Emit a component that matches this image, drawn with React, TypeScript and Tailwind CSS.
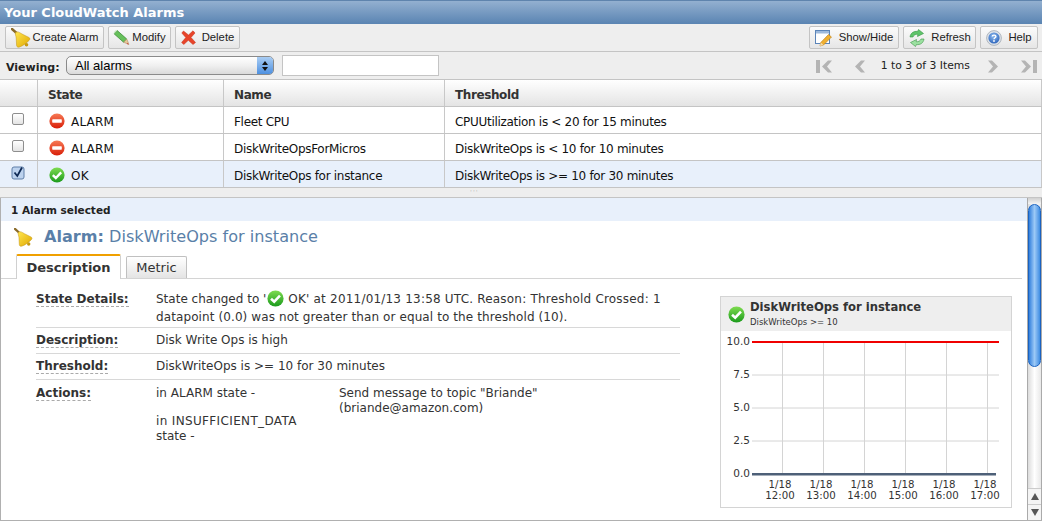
import React from "react";

const F = "[font-family:'DejaVu_Sans',Verdana,sans-serif]";
const G = "[font-family:'Liberation_Sans',Arial,sans-serif]";

function Bell({ s = 20, id }: { s?: number; id: string }) {
  return (
    <svg width={s} height={s} viewBox="0 0 20 20" className="shrink-0">
      <defs>
        <linearGradient id={id} x1="0" y1="0" x2="1" y2="1">
          <stop offset="0" stopColor="#ffe650" />
          <stop offset="1" stopColor="#e0a800" />
        </linearGradient>
      </defs>
      <path d="M1 1 L5.5 5" stroke="#8a6a28" strokeWidth="2.4" strokeLinecap="round" />
      <path d="M4.5 4.5 C6.5 3 8.5 4.5 11 6 L18 9.5 C19.5 10.5 19 11.5 18 12.5 C15 15.5 11.5 18 8.5 19 C7 19.5 5.8 19 5.6 17.5 L5.2 10 C5.1 8 3.8 6 4.5 4.5Z" fill={`url(#${id})`} stroke="#c09010" strokeWidth="0.5" />
      <circle cx="15.5" cy="16.8" r="1.8" fill="#c89a10" />
    </svg>
  );
}

function Pencil() {
  return (
    <svg width="17" height="17" viewBox="0 0 16 16" className="shrink-0">
      <path d="M1 4.5 L4 1.5 L13 9.5 L10 12.5 Z" fill="#66c05a" stroke="#3d8a38" strokeWidth="0.7" />
      <path d="M10 12.5 L13 9.5 L15 14.5 Z" fill="#e8c89a" stroke="#a8865a" strokeWidth="0.5" />
      <path d="M13.6 13.2 L15 14.5 L13 14 Z" fill="#d03030" />
      <path d="M1 4.5 L4 1.5 L2.8 1 L0.8 3Z" fill="#c8e8c0" />
    </svg>
  );
}

function RedX() {
  return (
    <svg width="15" height="15" viewBox="0 0 15 15" className="shrink-0">
      <path d="M2.5 1 L7.5 5 L12 0.8 L14 3 L10 7.5 L14.5 12.5 L12 14.5 L7.3 10.3 L2.8 14.5 L0.6 12.5 L4.8 7.6 L0.8 3 Z" fill="#e8442a" stroke="#c03018" strokeWidth="0.5" />
    </svg>
  );
}

function ShowHide() {
  return (
    <svg width="18" height="18" viewBox="0 0 18 18" className="shrink-0">
      <rect x="0.5" y="1.5" width="14" height="13" fill="#fff" stroke="#5b84b8" />
      <rect x="1" y="2" width="13" height="2.5" fill="#9db9dc" />
      <path d="M5 17 L5.8 13.5 L13.5 5.5 L16.5 8 L8.5 16 Z" fill="#f0b030" stroke="#b97a10" strokeWidth="0.6" />
      <path d="M5 17 L5.8 13.5 L8.5 16Z" fill="#f4dcb0" />
    </svg>
  );
}

function Refresh() {
  return (
    <svg width="18" height="18" viewBox="0 0 18 18" className="shrink-0">
      <path d="M2 8 C2.5 4 6 1.8 9.5 2.5 L10.5 0.5 L15.5 4.5 L9.5 7.5 L9.8 5.3 C7.5 5 5.8 6 5 8 Z" fill="#5fc46a" stroke="#3a9648" strokeWidth="0.6" />
      <path d="M16 10 C15.5 14 12 16.2 8.5 15.5 L7.5 17.5 L2.5 13.5 L8.5 10.5 L8.2 12.7 C10.5 13 12.2 12 13 10 Z" fill="#9be0a0" stroke="#3a9648" strokeWidth="0.6" />
    </svg>
  );
}

function Help() {
  return (
    <svg width="16" height="16" viewBox="0 0 16 16" className="shrink-0">
      <defs>
        <radialGradient id="helpg" cx="0.45" cy="0.35" r="0.7">
          <stop offset="0" stopColor="#8fbcf0" />
          <stop offset="1" stopColor="#2860b8" />
        </radialGradient>
      </defs>
      <circle cx="8" cy="8" r="7.4" fill="#dfe4ea" stroke="#8a94a0" strokeWidth="0.6" />
      <circle cx="8" cy="8" r="5.6" fill="url(#helpg)" />
      <path d="M6.2 6.5 C6.2 4.6 9.9 4.6 9.9 6.5 C9.9 7.8 8 7.8 8 9.2" fill="none" stroke="#fff" strokeWidth="1.4" />
      <circle cx="8" cy="11" r="0.9" fill="#fff" />
    </svg>
  );
}

function AlarmIcon({ id }: { id: string }) {
  return (
    <svg width="16" height="16" viewBox="0 0 16 16" className="shrink-0 block">
      <defs>
        <linearGradient id={id} x1="0" y1="0" x2="0" y2="1">
          <stop offset="0" stopColor="#f77a55" />
          <stop offset="1" stopColor="#d81e08" />
        </linearGradient>
      </defs>
      <circle cx="8" cy="8" r="7.6" fill={`url(#${id})`} />
      <rect x="3.2" y="6.3" width="9.6" height="3.4" rx="0.6" fill="#fff" />
    </svg>
  );
}

function OkIcon({ id, s = 16 }: { id: string; s?: number }) {
  return (
    <svg width={s} height={s} viewBox="0 0 16 16" className="shrink-0 block">
      <defs>
        <linearGradient id={id} x1="0" y1="0" x2="0" y2="1">
          <stop offset="0" stopColor="#7fdc50" />
          <stop offset="1" stopColor="#1a9a1c" />
        </linearGradient>
      </defs>
      <circle cx="8" cy="8" r="7.6" fill={`url(#${id})`} />
      <path d="M3.8 8.2 L6.8 11 L12.2 5.4" fill="none" stroke="#fff" strokeWidth="2.4" />
    </svg>
  );
}

function Btn({ icon, label, w, gap = "gap-[7px]" }: { icon: React.ReactNode; label: string; w: string; gap?: string }) {
  return (
    <div className={`${w} ${gap} h-[23px] flex items-center justify-center rounded-[2px] border border-[#c4c4c4] bg-gradient-to-b from-[#fbfbfb] to-[#e6e6e6] text-[#222] ${G} text-[11.3px]`}>
      {icon}
      <span>{label}</span>
    </div>
  );
}

function Pager({ dir, bar }: { dir: "l" | "r"; bar?: boolean }) {
  return (
    <svg width="17" height="15" viewBox="0 0 17 15" style={{ transform: dir === "r" ? "scaleX(-1)" : undefined }}>
      {bar && <rect x="0" y="1" width="4" height="13" fill="#b4b4b4" />}
      <path d={bar ? "M12 1.5 L6 7.5 L12 13.5 L16 13.5 L11 7.5 L16 1.5 Z" : "M9 1.5 L3 7.5 L9 13.5 L13 13.5 L8 7.5 L13 1.5 Z"} fill="#b4b4b4" />
    </svg>
  );
}

function Row({ sel, state, name, th, iconId }: { sel?: boolean; state: string; name: string; th: string; iconId: string }) {
  const ok = state === "OK";
  return (
    <div className={`grid grid-cols-[38px_186px_221px_1fr] h-[27px] border-b border-[#c4c4c4] ${sel ? "bg-[#e8f0fb]" : "bg-white"} text-[12px] tracking-[-0.3px] text-[#111]`}>
      <div className="flex items-center justify-center border-r border-[#c8c8c8] pb-[2px] pr-[2px]">
        {sel ? (
          <svg width="14" height="14" viewBox="0 0 14 14">
            <rect x="1" y="1" width="12" height="12" rx="2" fill="#bcd2ee" stroke="#5f7fa8" />
            <path d="M3.5 6.5 L6.3 10 L11 1.5" fill="none" stroke="#0f2a55" strokeWidth="1.8" />
          </svg>
        ) : (
          <div className="w-[12px] h-[12px] rounded-[2px] border border-[#8e8e8e] bg-gradient-to-b from-white to-[#e4e4e4]" />
        )}
      </div>
      <div className="flex items-center gap-[6px] pl-[11px] border-r border-[#c8c8c8]">
        <span className="pt-[1px]">{ok ? <OkIcon id={iconId} /> : <AlarmIcon id={iconId} />}</span>
        <span className="pt-[3px] tracking-[0.2px]">{state}</span>
      </div>
      <div className="flex items-center pl-[10px] pt-[3px] border-r border-[#c8c8c8]">{name}</div>
      <div className="flex items-center pl-[10px] pt-[3px] border-r border-[#c8c8c8]">{th}</div>
    </div>
  );
}

function Detail({ label, children, last, pad = "pt-[3px] pb-[4px]" }: { label: string; children: React.ReactNode; last?: boolean; pad?: string }) {
  return (
    <div className={`grid grid-cols-[120px_1fr] ${last ? "" : "border-b border-[#d8d8d8]"} ${pad}`}>
      <div className="font-bold text-[#333]">
        <span className="border-b border-dashed border-[#aaa]">{label}</span>
      </div>
      <div className="text-[#333]">{children}</div>
    </div>
  );
}

function Chart() {
  const ys: [string, number][] = [["10.0", 46], ["7.5", 79], ["5.0", 112], ["2.5", 145], ["0.0", 178]];
  const xs = [62, 103, 144, 185, 226, 267];
  const times = ["12:00", "13:00", "14:00", "15:00", "16:00", "17:00"];
  return (
    <div className="w-[292px] h-[212px] shrink-0 border border-[#d4d4d4] bg-white">
      <div className="h-[34px] bg-[#eeeeee] flex items-center pl-[7px] gap-[5px]">
        <OkIcon id="okchart" s={17} />
        <div className="flex flex-col">
          <span className="text-[11.6px] leading-[14px] font-bold text-[#333]">DiskWriteOps for instance</span>
          <span className="text-[8.5px] leading-[14px] text-[#333] mt-[1px]">DiskWriteOps &gt;= 10</span>
        </div>
      </div>
      <svg width="290" height="176" viewBox="0 35 290 176" className="block">
        {ys.slice(1, 4).map(([, y]) => (
          <line key={y} x1="31" x2="278" y1={y} y2={y} stroke="#d4d4d4" />
        ))}
        {xs.map((x) => (
          <line key={x} x1={x - 0.5} x2={x - 0.5} y1="46" y2="178" stroke="#d4d4d4" />
        ))}
        <rect x="31" y="45" width="247" height="2" fill="#f00000" />
        <rect x="31" y="177" width="244" height="2.5" fill="#4e6078" />
        {ys.map(([t, y]) => (
          <g key={t}>
            <text x="29" y={y + 2.5} textAnchor="end" fontSize="10.5" fill="#333" fontFamily="DejaVu Sans">{t}</text>
          </g>
        ))}
        {xs.map((x, i) => (
          <g key={x} fontSize="10.2" fill="#333" fontFamily="DejaVu Sans" textAnchor="middle">
            <text x={x - 3} y="192">1/18</text>
            <text x={x - 3} y="203">{times[i]}</text>
          </g>
        ))}
      </svg>
    </div>
  );
}

function Scrollbar() {
  return (
    <div className="w-[15px] shrink-0 flex flex-col bg-gradient-to-r from-[#dcdcdc] via-white to-[#e8e8e8] border-x border-[#aaa]">
      <div className="h-[6px] bg-gradient-to-b from-[#d0d0d0] to-[#f4f4f4]" />
      <div className="h-[163px] rounded-[7px] border border-[#1a62c0] bg-gradient-to-r from-[#2f7fdc] via-[#9cc9f6] to-[#3d8ce2]" />
      <div className="flex-1" />
      <div className="h-[16px] flex items-center justify-center border-t border-[#ccc] bg-[#f4f4f4]">
        <svg width="8" height="7" viewBox="0 0 8 7"><path d="M4 0 L8 7 L0 7Z" fill="#555" /></svg>
      </div>
      <div className="h-[16px] flex items-center justify-center border-t border-[#ccc] bg-[#f4f4f4]">
        <svg width="8" height="7" viewBox="0 0 8 7"><path d="M4 7 L8 0 L0 0Z" fill="#555" /></svg>
      </div>
    </div>
  );
}

export default function App() {
  return (
    <div className={`w-[1042px] h-[521px] overflow-hidden flex flex-col bg-white ${F}`}>
      <div className="h-[24px] shrink-0 flex items-center pl-[4px] border-t border-[#5f84ad] bg-gradient-to-b from-[#93b0d0] to-[#5a84b2] text-white font-bold text-[13px]">
        Your CloudWatch Alarms
      </div>
      <div className="h-[28px] shrink-0 flex items-center justify-between px-[5px] pr-[4px] bg-[#eeeeee] border-b border-[#c4c4c4]">
        <div className="flex gap-[4px]">
          <Btn w="w-[99px]" icon={<Bell s={20} id="bellbtn" />} label="Create Alarm" gap="gap-[2px]" />
          <Btn w="w-[63px]" icon={<Pencil />} label="Modify" gap="gap-[2px]" />
          <Btn w="w-[65px]" icon={<RedX />} label="Delete" gap="gap-[6px]" />
        </div>
        <div className="flex gap-[4px]">
          <Btn w="w-[90px]" icon={<ShowHide />} label="Show/Hide" gap="gap-[6px]" />
          <Btn w="w-[73px]" icon={<Refresh />} label="Refresh" gap="gap-[5px]" />
          <Btn w="w-[58px]" icon={<Help />} label="Help" gap="gap-[6px]" />
        </div>
      </div>
      <div className="h-[28px] shrink-0 flex items-center bg-[#eeeeee] border-b border-[#c4c4c4] pl-[6px] pr-[5px]">
        <span className="w-[60px] font-bold text-[11px] text-[#222] pt-[5px]">Viewing:</span>
        <div className={`w-[208px] h-[19px] flex items-center justify-between rounded-[5px] border border-[#8a8a8a] bg-gradient-to-b from-white via-[#f0f0f0] to-[#dadada] pl-[8px] text-[13px] text-black ${G}`}>
          <span className="pt-[1px]">All alarms</span>
          <div className="w-[16px] h-full rounded-r-[4px] bg-gradient-to-b from-[#a9cdf3] to-[#4d90e0] flex flex-col items-center justify-center gap-[2px]">
            <svg width="6" height="4" viewBox="0 0 6 4"><path d="M3 0 L6 4 L0 4Z" fill="#111" /></svg>
            <svg width="6" height="4" viewBox="0 0 6 4"><path d="M3 4 L6 0 L0 0Z" fill="#111" /></svg>
          </div>
        </div>
        <div className="w-[157px] h-[21px] ml-[8px] bg-white border border-[#c4c4c4]" />
        <div className="ml-auto flex items-center text-[#222] text-[10.8px] pt-[2px]">
          <Pager dir="l" bar />
          <div className="w-[19px]" />
          <Pager dir="l" />
          <span className="ml-[12px] mr-[14px] whitespace-nowrap">1 to 3 of 3 Items</span>
          <Pager dir="r" />
          <div className="w-[19px]" />
          <Pager dir="r" bar />
        </div>
      </div>
      <div className="grid grid-cols-[38px_186px_221px_1fr] h-[27px] shrink-0 border-b border-[#c4c4c4] bg-gradient-to-b from-white to-[#e4e4e4] font-bold text-[12px] tracking-[-0.4px] text-[#333]">
        <div className="border-r border-[#c8c8c8]" />
        <div className="flex items-center pl-[10px] pt-[3px] border-r border-[#c8c8c8]">State</div>
        <div className="flex items-center pl-[10px] pt-[3px] border-r border-[#c8c8c8]">Name</div>
        <div className="flex items-center pl-[10px] pt-[3px] border-r border-[#c8c8c8]">Threshold</div>
      </div>
      <div className="shrink-0">
        <Row iconId="r1" state="ALARM" name="Fleet CPU" th="CPUUtilization is < 20 for 15 minutes" />
        <Row iconId="r2" state="ALARM" name="DiskWriteOpsForMicros" th="DiskWriteOps is < 10 for 10 minutes" />
        <Row iconId="r3" sel state="OK" name="DiskWriteOps for instance" th="DiskWriteOps is >= 10 for 30 minutes" />
      </div>
      <div className="h-[10px] shrink-0 bg-[#eeeeee] border-b border-[#c4c4c4] flex pl-[470px]">
        <span className="text-[6px] leading-[6px] text-[#888] tracking-[1px]">···</span>
      </div>
      <div className="flex-1 min-h-0 flex border-l border-b border-[#b0b0b0]">
        <div className="flex-1 min-w-0 flex flex-col">
          <div className="h-[23px] shrink-0 bg-[#e8f0fb] flex items-center pl-[10px] pt-[2px] font-bold text-[10.5px] text-[#222]">1 Alarm selected</div>
          <div className="h-[33px] shrink-0 flex items-center pl-[13px] pb-[1px] gap-[11px] text-[16.1px] text-[#5a7fa8]">
            <Bell s={19} id="belltitle" />
            <span><b className="font-bold">Alarm:</b> DiskWriteOps for instance</span>
          </div>
          <div className="h-[25px] shrink-0 flex items-end gap-[5px] pl-[15px] mr-[5px] border-b border-[#d4d4d4]">
            <div className="w-[105px] h-[25px] -mb-[1px] bg-white border border-[#d0d0d0] border-b-0 border-t-2 border-t-[#f0a000] rounded-t-[2px] flex items-center justify-center font-bold text-[13px] text-[#333]">Description</div>
            <div className="w-[61px] h-[22px] border border-[#c0c0c0] border-b-0 rounded-t-[2px] bg-gradient-to-b from-white to-[#e4e4e4] flex items-center justify-center text-[13px] text-[#333]">Metric</div>
          </div>
          <div className="flex flex-1 min-h-0 pt-[7px] pl-[35px] pr-[15px]">
            <div className="w-[644px] text-[12px] leading-[18px]">
              <Detail label="State Details:" pad="pt-[4px] pb-[1px]">
                <div className="flex items-center whitespace-nowrap">
                  <span>State changed to '</span>
                  <span className="ml-[1px] mr-[4px] -mt-[2px]"><OkIcon id="okinline" s={17} /></span>
                  <span className="tracking-[0.2px]">OK' at 2011/01/13 13:58 UTC. Reason: Threshold Crossed: 1</span>
                </div>
                <div className="tracking-[0.1px]">datapoint (0.0) was not greater than or equal to the threshold (10).</div>
              </Detail>
              <Detail label="Description:">Disk Write Ops is high</Detail>
              <Detail label="Threshold:">DiskWriteOps is &gt;= 10 for 30 minutes</Detail>
              <Detail label="Actions:" last pad="pt-[4px] pb-[4px]">
                <div className="grid grid-cols-[183px_1fr] leading-[15px] pt-[2px]">
                  <div className="w-[150px]">
                    <div className="mb-[13px]">in ALARM state -</div>
                    <div><span className="tracking-[0.35px]">in INSUFFICIENT_DATA</span> state -</div>
                  </div>
                  <div className="w-[230px]">Send message to topic "Briande" (briande@amazon.com)</div>
                </div>
              </Detail>
            </div>
            <div className="ml-auto pt-[10px]">
              <Chart />
            </div>
          </div>
        </div>
        <Scrollbar />
      </div>
    </div>
  );
}
